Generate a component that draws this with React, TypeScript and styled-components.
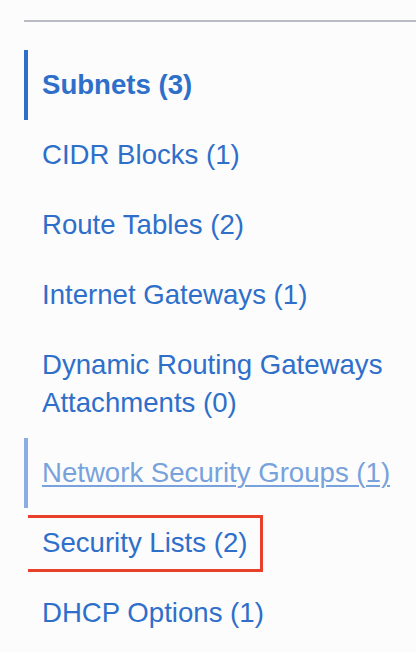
import React from "react";
import styled, { createGlobalStyle } from "styled-components";

const Global = createGlobalStyle`
  html, body { margin: 0; padding: 0; background: #fcfcfd; }
  body { font-family: "Liberation Sans", Arial, sans-serif; }
`;

const Page = styled.div`
  width: 416px;
  height: 652px;
  overflow: hidden;
  padding-left: 24px;
  padding-top: 20px;
  box-sizing: border-box;
  background: #fcfcfd;
`;

const Divider = styled.hr`
  margin: 0;
  border: none;
  height: 2px;
  background: #b9bcc3;
`;

const List = styled.ul`
  list-style: none;
  margin: 28px 0 0 0;
  padding: 0;
  width: 372px;
`;

const Item = styled.li<{ $bar?: "active" | "hover" }>`
  padding: 16px 0 16px 14px;
  border-left: 4px solid
    ${(p) => (p.$bar === "active" ? "#2e6fca" : p.$bar === "hover" ? "#8aaee2" : "transparent")};
  font-size: 27.6px;
  line-height: 38px;
  overflow: hidden;
`;

const Link = styled.a<{ $active?: boolean; $hover?: boolean; $nowrap?: boolean; $marked?: boolean }>`
  position: relative;
  display: inline-block;
  color: ${(p) => (p.$hover ? "#78a2dc" : "#2e6fca")};
  font-weight: ${(p) => (p.$active ? 700 : 400)};
  text-decoration: ${(p) => (p.$hover ? "underline" : "none")};
  text-decoration-thickness: 2px;
  text-underline-offset: 3px;
  white-space: ${(p) => (p.$nowrap ? "nowrap" : "normal")};
  cursor: pointer;
  ${(p) =>
    p.$marked &&
    `
    &::after {
      content: "";
      position: absolute;
      left: -17px;
      right: -16px;
      top: -9px;
      bottom: -10px;
      border: 3px solid #e8402a;
    }
  `}
`;

const items = [
  { label: "Subnets (3)", active: true },
  { label: "CIDR Blocks (1)" },
  { label: "Route Tables (2)" },
  { label: "Internet Gateways (1)" },
  { label: "Dynamic Routing Gateways Attachments (0)" },
  { label: "Network Security Groups (1)", hover: true },
  { label: "Security Lists (2)", marked: true },
  { label: "DHCP Options (1)" },
];

export default function App() {
  return (
    <Page>
      <Global />
      <Divider />
      <List>
        {items.map((it) => (
          <Item key={it.label} $bar={it.active ? "active" : it.hover ? "hover" : undefined}>
            <Link
              $active={it.active}
              $hover={it.hover}
              $nowrap={it.hover}
              $marked={it.marked}
            >
              {it.label}
            </Link>
          </Item>
        ))}
      </List>
    </Page>
  );
}
